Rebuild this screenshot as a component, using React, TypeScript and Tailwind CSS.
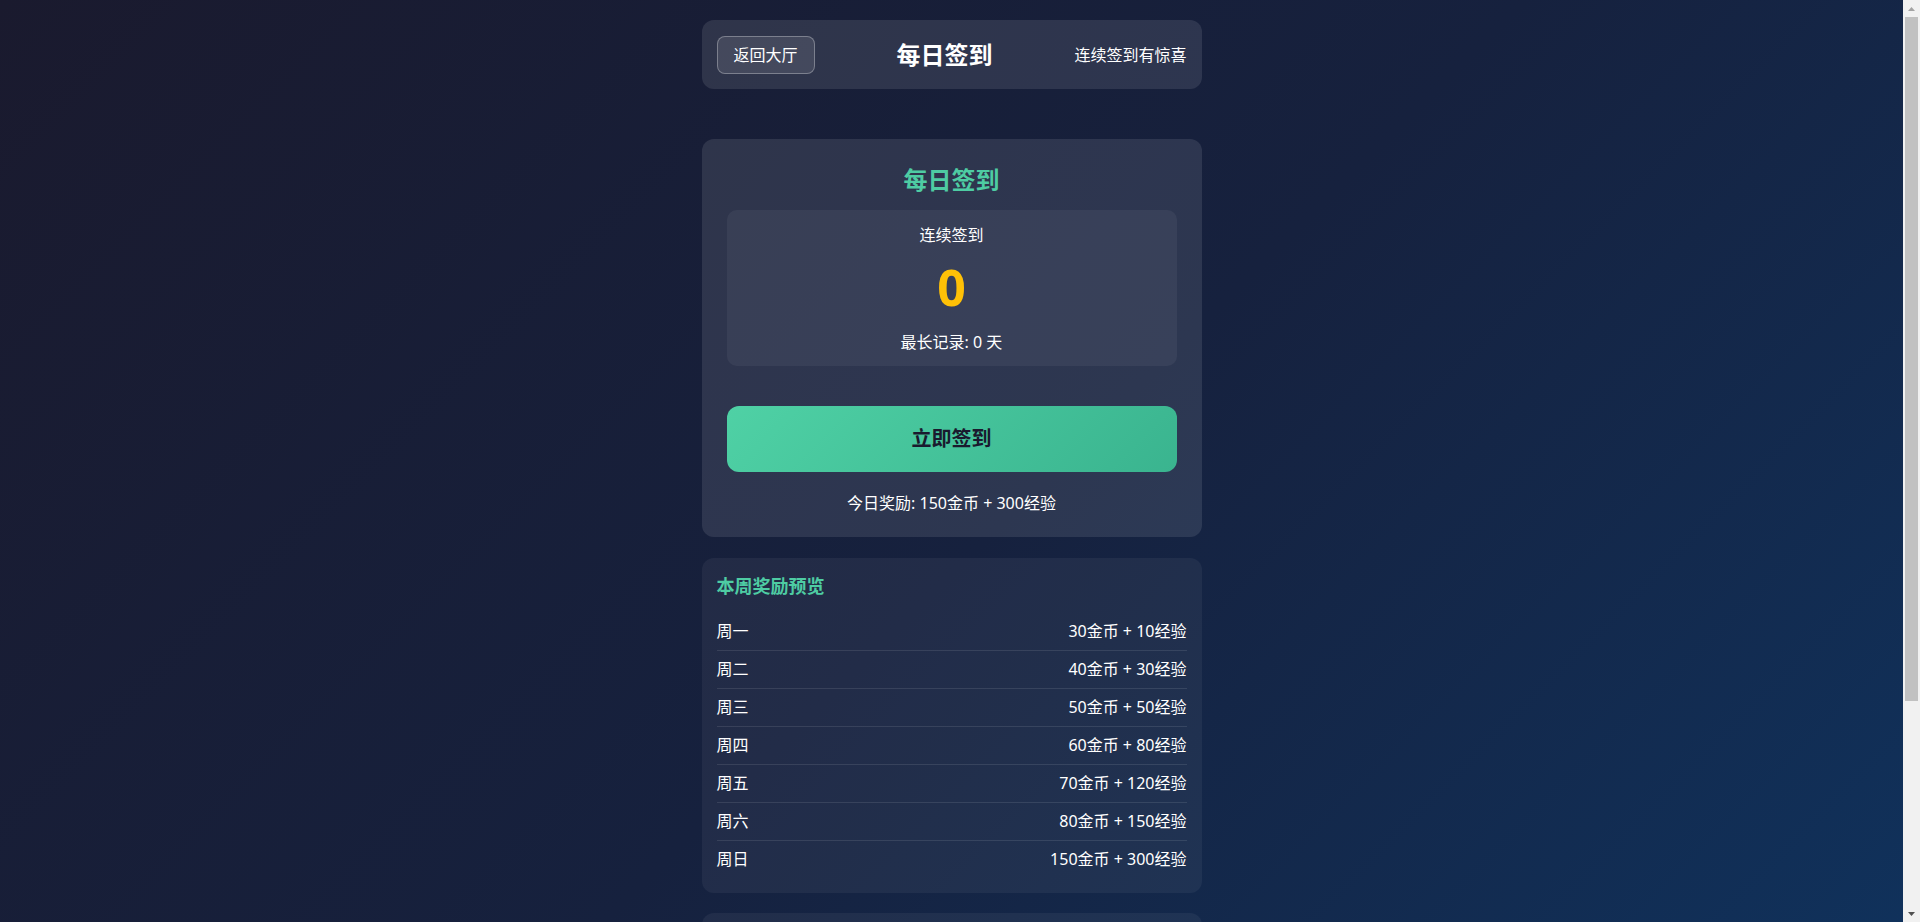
import React from 'react';

const font = { fontFamily: '"Noto Sans", "Noto Sans CJK SC", sans-serif' };

const weekRewards = [
  { day: '周一', reward: '30金币 + 10经验' },
  { day: '周二', reward: '40金币 + 30经验' },
  { day: '周三', reward: '50金币 + 50经验' },
  { day: '周四', reward: '60金币 + 80经验' },
  { day: '周五', reward: '70金币 + 120经验' },
  { day: '周六', reward: '80金币 + 150经验' },
  { day: '周日', reward: '150金币 + 300经验' },
];

const rules = [
  '每天只能签到一次，每日0点刷新',
  '连续签到天数越多，奖励越丰厚',
  '中断签到后连续天数将重新计算',
  '每周日可领取本周最高奖励',
];

// fake classic scrollbar, the reference was shot with one
const Scrollbar = () => (
  <div className="sticky top-0 flex h-screen w-[17px] shrink-0 flex-col self-start bg-[#f1f1f1]">
    <div className="flex h-[17px] items-center justify-center">
      <svg width="7" height="4" viewBox="0 0 7 4">
        <path d="M0 4 L3.5 0 L7 4 Z" fill="#a3a3a3" />
      </svg>
    </div>
    <div className="flex-1 px-[2px]">
      <div className="h-[684px] bg-[#c1c1c1]" />
    </div>
    <div className="flex h-[17px] items-center justify-center">
      <svg width="7" height="4" viewBox="0 0 7 4">
        <path d="M0 0 L7 0 L3.5 4 Z" fill="#505050" />
      </svg>
    </div>
  </div>
);

export default function App() {
  return (
    <div
      style={font}
      className="flex min-h-screen bg-[linear-gradient(135deg,#1a1a2e_0%,#16213e_50%,#0f3460_100%)] text-white"
    >
      <main className="flex-1">
        <div className="mx-auto w-[500px] pt-5 pb-5">
          {/* header */}
          <div className="flex items-center justify-between rounded-xl bg-white/10 p-[15px] h-[69px] mb-[50px]">
            <button className="rounded-lg border border-white/30 bg-white/10 px-4 py-1.5 text-base leading-6 text-white">
              返回大厅
            </button>
            <h1 className="text-2xl font-bold leading-9">每日签到</h1>
            <span className="text-base leading-6 text-white">连续签到有惊喜</span>
          </div>

          {/* sign-in card */}
          <div className="rounded-xl bg-white/10 px-[25px] pt-[23px] pb-[22px] text-center">
            <h2 className="text-2xl font-bold leading-9 text-[#4ecca3] mb-3">每日签到</h2>
            <div className="rounded-[10px] bg-white/5 pt-[13px] pb-3">
              <div className="text-base leading-6">连续签到</div>
              <div className="mt-[10px] text-[50px] font-bold leading-[60px] text-[#ffc107]">0</div>
              <div className="mt-[13px] text-base leading-6">最长记录: 0 天</div>
            </div>
            <button className="mt-10 flex h-[66px] w-full items-center justify-center rounded-xl bg-[linear-gradient(135deg,#4fd1a5,#3ab48f)] text-xl font-bold text-[#1a1a2e]">
              立即签到
            </button>
            <div className="mt-[19px] text-base leading-6">今日奖励: 150金币 + 300经验</div>
          </div>

          {/* week preview */}
          <div className="mt-[21px] rounded-xl bg-white/5 p-[15px]">
            <h3 className="text-lg font-bold leading-[27px] text-[#4ecca3] mb-[13px]">本周奖励预览</h3>
            <div className="flex flex-col">
              {weekRewards.map((r) => (
                <div
                  key={r.day}
                  className="flex items-center justify-between border-b border-white/10 py-2 text-base leading-[21px] last:border-b-0"
                >
                  <span>{r.day}</span>
                  <span>{r.reward}</span>
                </div>
              ))}
            </div>
          </div>

          {/* rules */}
          <div className="mt-5 rounded-xl bg-white/5 px-[15px] pt-6 pb-[15px]">
            <h3 className="text-lg font-bold leading-[27px] text-[#4ecca3] mb-3">签到规则</h3>
            <ul className="flex flex-col gap-2 text-sm leading-6 text-white/80">
              {rules.map((t) => (
                <li key={t}>• {t}</li>
              ))}
            </ul>
          </div>
        </div>
      </main>
      <Scrollbar />
    </div>
  );
}
